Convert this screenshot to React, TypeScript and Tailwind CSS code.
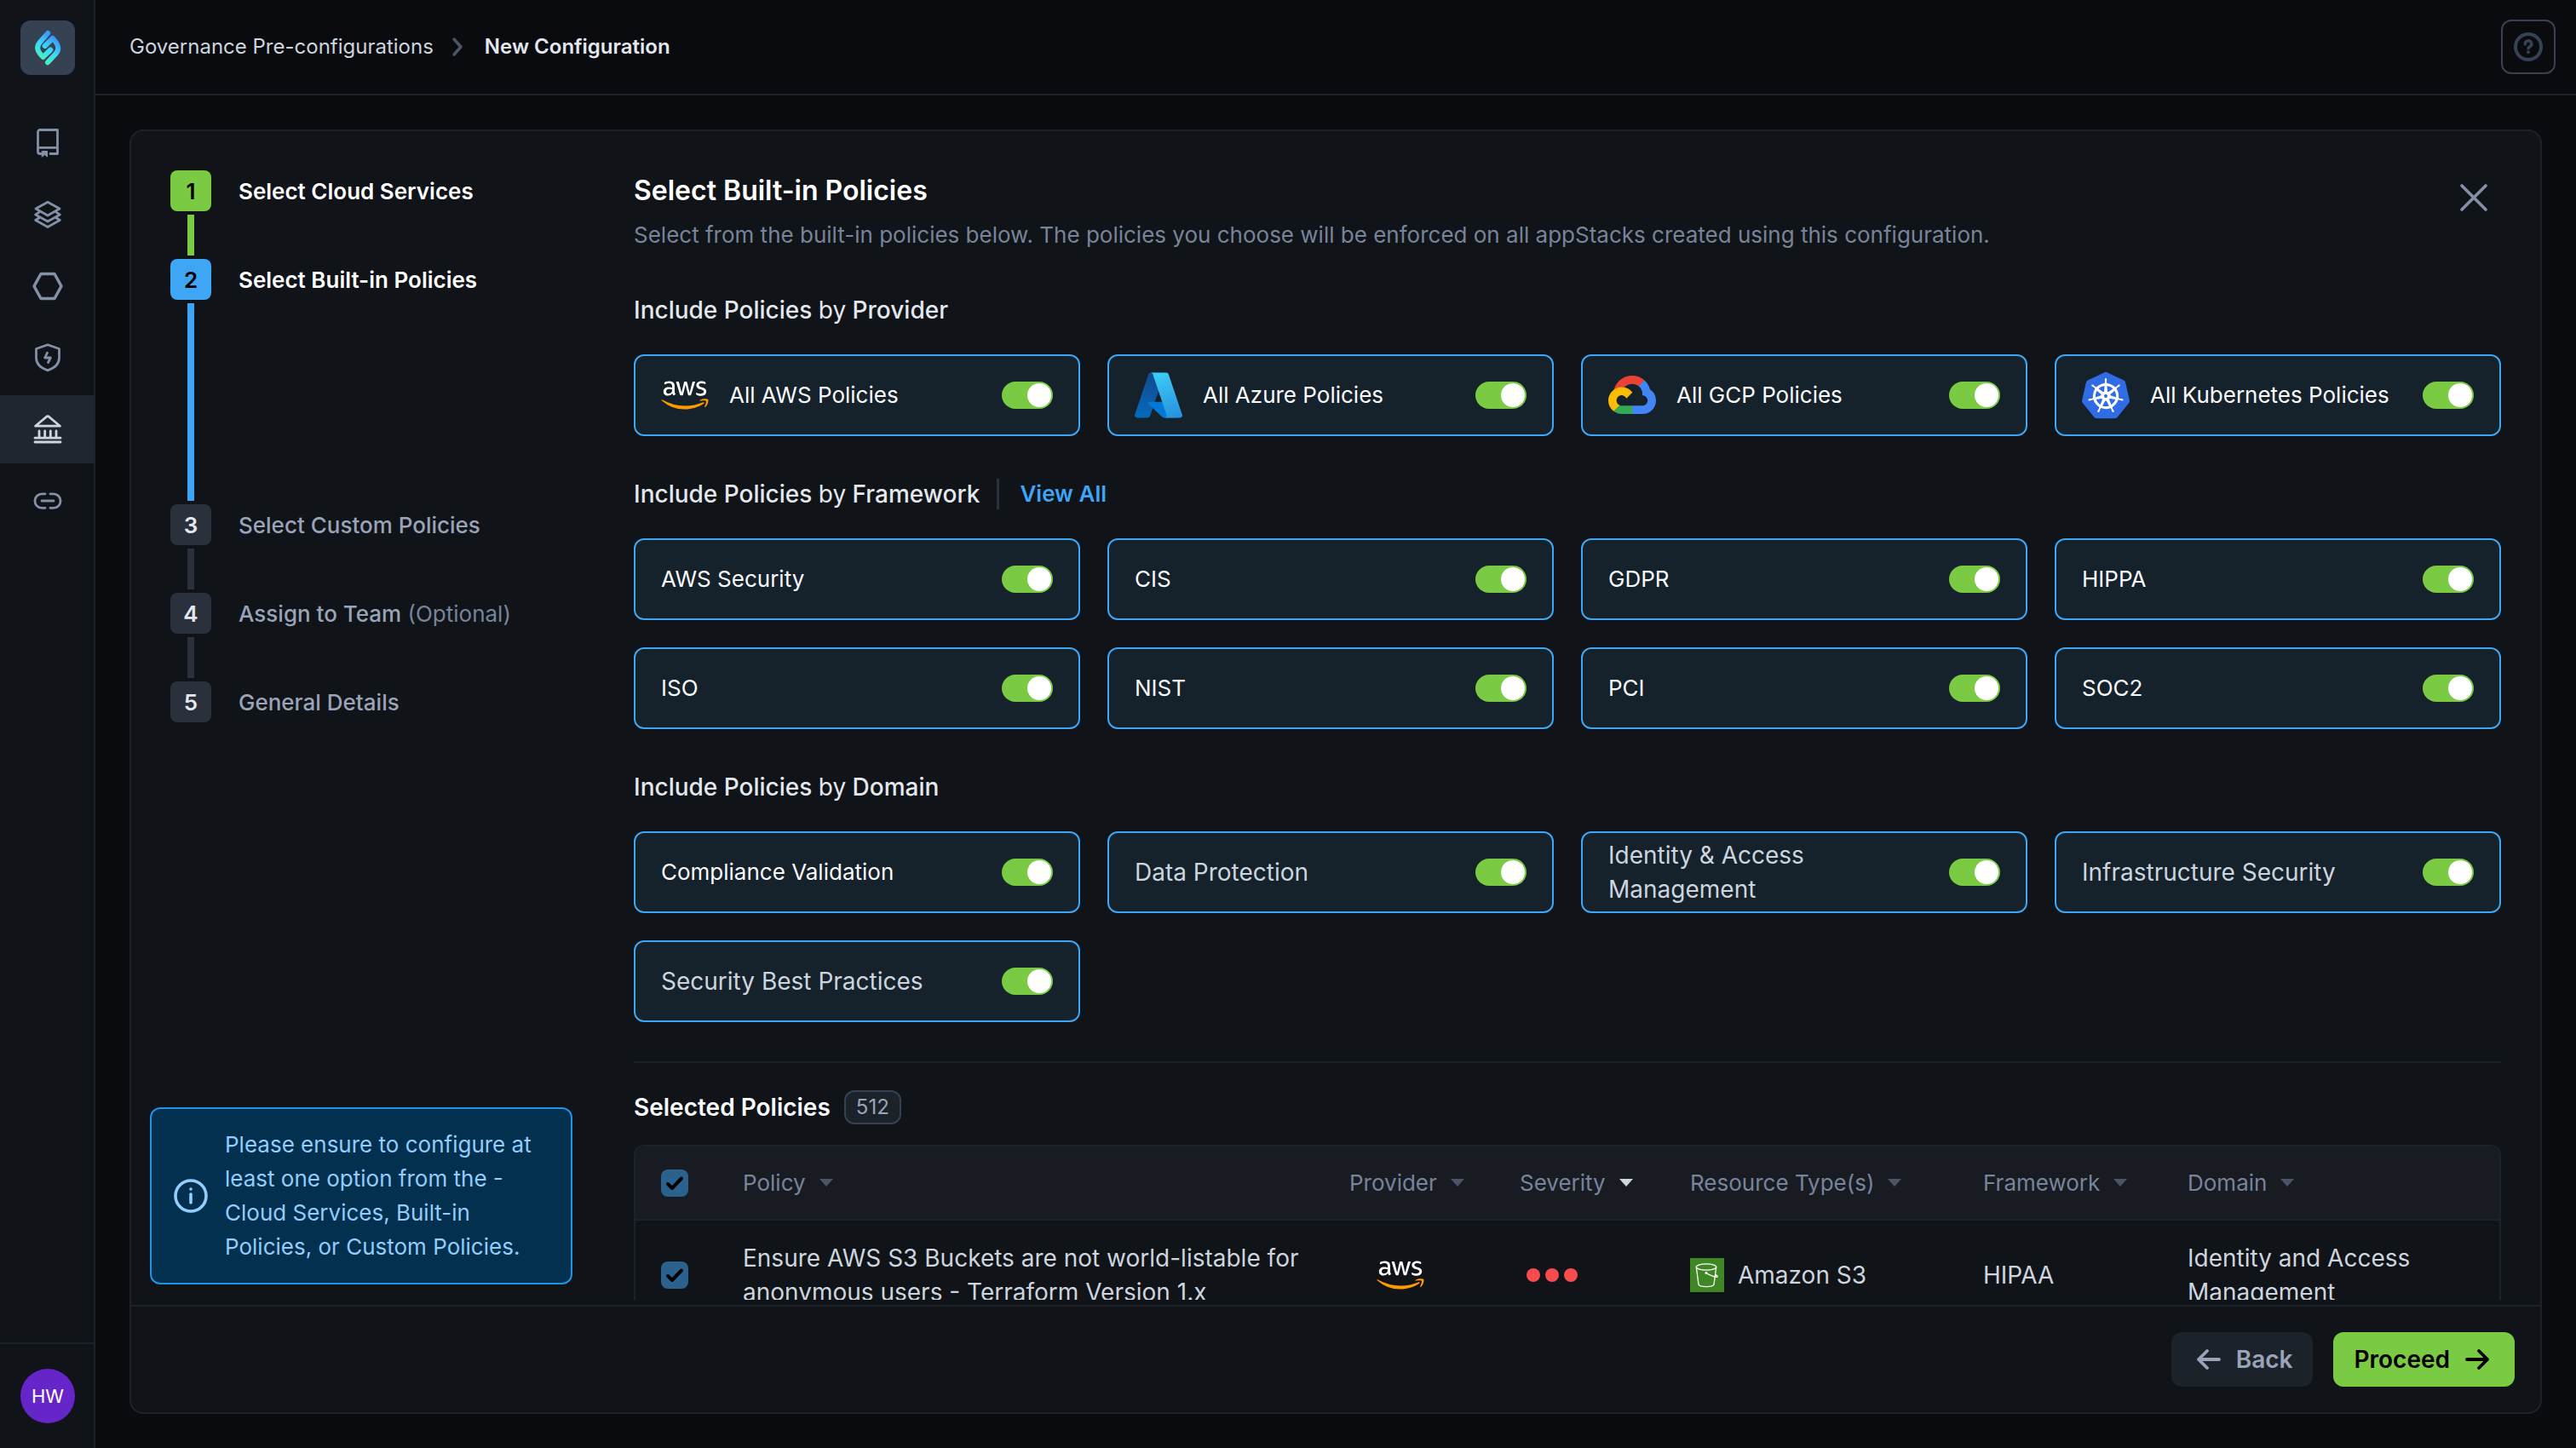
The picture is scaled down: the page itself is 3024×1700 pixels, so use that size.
import { useState } from "react";
import type { ReactNode } from "react";
import clsx from "clsx";
import { FaAws } from "react-icons/fa";
import { SiKubernetes } from "react-icons/si";

type Step = {
  label: string;
  hint?: string;
  state: "done" | "current" | "todo";
};

type PolicyOption = {
  label: string;
  icon?: ReactNode;
  large?: boolean;
};

const LogoMark = () => (
  <svg viewBox="0 0 64 64" className="size-16" fill="none" aria-hidden="true">
    <defs>
      <linearGradient id="logo-mark" x1="0.7" y1="0" x2="0.3" y2="1">
        <stop offset="0" stopColor="#3b9bfa" />
        <stop offset="0.55" stopColor="#3cd8fb" />
        <stop offset="1" stopColor="#48ecc4" />
      </linearGradient>
    </defs>
    <g
      stroke="url(#logo-mark)"
      strokeWidth="6"
      strokeLinecap="round"
      strokeLinejoin="round"
    >
      <path d="M32.2 15 22.5 26C18.6 31 19.2 35.5 26.5 43L35.3 34.5" />
      <path d="M32 49.2 42 38.5C45.8 33.5 45.2 28.5 37.8 21L28.7 30" />
    </g>
  </svg>
);

const AwsLogo = () => (
  <>
    <svg width="0" height="0" className="absolute" aria-hidden="true">
      <linearGradient id="aws-fill" x1="0" y1="0" x2="0" y2="1">
        <stop offset="0.6" stopColor="#ffffff" />
        <stop offset="0.6" stopColor="#ff9900" />
      </linearGradient>
    </svg>
    <FaAws className="h-11 w-14 fill-[url(#aws-fill)]" aria-label="AWS" />
  </>
);

const AzureLogo = () => (
  <svg viewBox="4 4 88 88" className="size-14" aria-hidden="true">
    <defs>
      <linearGradient
        id="azure-left"
        x1="58.9"
        y1="12.7"
        x2="31.9"
        y2="92.6"
        gradientUnits="userSpaceOnUse"
      >
        <stop offset="0" stopColor="#114a8b" />
        <stop offset="1" stopColor="#0669bc" />
      </linearGradient>
      <linearGradient
        id="azure-right"
        x1="45.8"
        y1="10.3"
        x2="75.5"
        y2="89.4"
        gradientUnits="userSpaceOnUse"
      >
        <stop offset="0" stopColor="#3ccbf4" />
        <stop offset="1" stopColor="#2892df" />
      </linearGradient>
    </defs>
    <path
      fill="url(#azure-left)"
      d="M33.338 6.544h26.038l-27.03 80.087a4.152 4.152 0 0 1-3.933 2.824H8.149a4.145 4.145 0 0 1-3.928-5.47L29.404 9.368a4.152 4.152 0 0 1 3.934-2.825z"
    />
    <path
      fill="#0078d4"
      d="M71.175 60.261h-41.29a1.911 1.911 0 0 0-1.305 3.309l26.532 24.764a4.171 4.171 0 0 0 2.846 1.121h23.38z"
    />
    <path
      fill="url(#azure-right)"
      d="M66.595 9.364a4.145 4.145 0 0 0-3.928-2.82H33.648a4.146 4.146 0 0 1 3.928 2.82l25.184 74.62a4.146 4.146 0 0 1-3.928 5.472h29.02a4.146 4.146 0 0 0 3.927-5.472z"
    />
  </svg>
);

const GcpLogo = () => (
  <svg viewBox="0 0 256 206" className="w-14" aria-hidden="true">
    <path
      fill="#ea4335"
      d="M170.252 56.819l22.253-22.253 1.483-9.37C153.437-11.677 88.976-7.496 52.42 33.92 42.267 45.423 34.734 59.764 30.717 74.573l7.97-1.123 44.505-7.34 3.436-3.513c19.797-21.742 53.27-24.667 76.128-6.168l7.496.39z"
    />
    <path
      fill="#4285f4"
      d="M224.205 73.918a100.249 100.249 0 0 0-30.217-48.722l-31.232 31.232a55.515 55.515 0 0 1 20.379 44.037v5.544c15.35 0 27.797 12.445 27.797 27.796 0 15.352-12.446 27.485-27.797 27.485h-55.671l-5.466 5.934v33.34l5.466 5.231h55.67c39.93.311 72.553-31.494 72.864-71.424a72.303 72.303 0 0 0-31.793-60.453"
    />
    <path
      fill="#34a853"
      d="M71.87 205.796h55.593V161.29H71.87a27.275 27.275 0 0 1-11.4-2.498l-7.887 2.42-22.409 22.253-1.952 7.574c12.567 9.489 27.9 14.825 43.647 14.757"
    />
    <path
      fill="#fbbc05"
      d="M71.87 61.425C31.94 61.664-.237 94.228.001 134.158a72.301 72.301 0 0 0 28.222 56.88l32.248-32.246c-13.99-6.322-20.208-22.786-13.887-36.776 6.32-13.99 22.786-20.208 36.775-13.888a27.796 27.796 0 0 1 13.887 13.888l32.248-32.248A72.224 72.224 0 0 0 71.87 61.425"
    />
  </svg>
);

// white disc shows through the wheel cut out of the glyph
const KubernetesLogo = () => (
  <SiKubernetes
    className="size-14 bg-[radial-gradient(closest-side,#fff_84%,transparent_85%)] text-[#326ce5]"
    aria-hidden="true"
  />
);

const S3Icon = () => (
  <svg
    viewBox="0 0 40 40"
    className="size-10 bg-[#3f8624]"
    fill="none"
    stroke="#fff"
    strokeWidth="1.3"
    strokeLinecap="round"
    aria-hidden="true"
  >
    <ellipse cx="19" cy="10.5" rx="11.7" ry="3.7" />
    <path d="M7.3 10.5 10 31c.6 1.6 4 2.6 9 2.6s8.4-1 9-2.6l2.7-20.5" />
    <path d="M19 17.6c4 2.2 8 4 11 4.6 2 .4 2.8-.4 1.5-1.6l-1.6-1" />
    <circle cx="19" cy="17.6" r="0.9" fill="#fff" />
  </svg>
);

const navItems = [
  {
    label: "Catalog",
    icon: (
      <>
        <path d="M11 30.5H9A2.5 2.5 0 0 1 6.5 28V5A2.5 2.5 0 0 1 9 2.5h20.5v28H21" />
        <path d="M7 23.3h22" />
        <path
          d="M11.5 27.5h6v6.5l-3-2.5-3 2.5z"
          fill="currentColor"
          strokeWidth="1"
        />
      </>
    ),
  },
  {
    label: "Stacks",
    icon: (
      <>
        <path d="M18 3.2 32 11 18 19 4 11z" />
        <path d="M8 15.2 3.7 18 18 26 32.3 18 28 15.2" />
        <path d="M8 21.8 3.7 24.5 18 32.5l14.3-8L28 21.8" />
      </>
    ),
  },
  {
    label: "Resources",
    icon: <path strokeWidth="3.5" d="M2 18 10 3.5h16L34 18l-8 14.5H10z" />,
  },
  {
    label: "Security",
    icon: (
      <>
        <path d="M18 2.8 31.5 7.5V18c0 7-5 12-13.5 14.8C9.5 30 4.5 25 4.5 18V7.5z" />
        <path d="M17.5 12.2 14.7 18h6.6l-2.8 5.6" />
      </>
    ),
  },
  {
    label: "Governance",
    active: true,
    icon: (
      <>
        <path d="M16.6 3.2q1.4-1 2.8 0L32.5 14.2h-29z" />
        <path d="M8 20v7M14.7 20v7M21.3 20v7M28 20v7M3 28.2h30M3 33h30" />
      </>
    ),
  },
  {
    label: "Integrations",
    icon: (
      <path d="M15 9.8h-3.8a8.3 8.3 0 0 0 0 16.6H15M21 9.8h3.8a8.3 8.3 0 0 1 0 16.6H21M11 18h14" />
    ),
  },
];

const steps: Step[] = [
  { label: "Select Cloud Services", state: "done" },
  { label: "Select Built-in Policies", state: "current" },
  { label: "Select Custom Policies", state: "todo" },
  { label: "Assign to Team", hint: "(Optional)", state: "todo" },
  { label: "General Details", state: "todo" },
];

const providers: PolicyOption[] = [
  { label: "All AWS Policies", icon: <AwsLogo /> },
  { label: "All Azure Policies", icon: <AzureLogo /> },
  { label: "All GCP Policies", icon: <GcpLogo /> },
  { label: "All Kubernetes Policies", icon: <KubernetesLogo /> },
];

const frameworks: PolicyOption[] = [
  { label: "AWS Security" },
  { label: "CIS" },
  { label: "GDPR" },
  { label: "HIPPA" },
  { label: "ISO" },
  { label: "NIST" },
  { label: "PCI" },
  { label: "SOC2" },
];

const domains: PolicyOption[] = [
  { label: "Compliance Validation" },
  { label: "Data Protection", large: true },
  { label: "Identity & Access Management", large: true },
  { label: "Infrastructure Security", large: true },
  { label: "Security Best Practices", large: true },
];

const columns = [
  { label: "Policy" },
  { label: "Provider" },
  { label: "Severity", sorted: true },
  { label: "Resource Type(s)" },
  { label: "Framework" },
  { label: "Domain" },
];

const Sidebar = () => (
  <aside className="flex w-28 shrink-0 flex-col border-r-2 border-[#1c2229] bg-[#101317]">
    <div className="flex h-28 items-center justify-center pl-0.5">
      <a href="#" aria-label="Home" className="rounded-xl bg-[#364152]">
        <LogoMark />
      </a>
    </div>
    <nav className="mt-4 flex flex-1 flex-col gap-1">
      {navItems.map((item) => (
        <a
          key={item.label}
          href="#"
          aria-label={item.label}
          className={clsx(
            "flex h-20 items-center justify-center pl-0.5",
            item.active ? "bg-[#20262d] text-[#cdd5df]" : "text-[#8490a5]"
          )}
        >
          <svg
            viewBox="0 0 36 36"
            className="size-9"
            fill="none"
            stroke="currentColor"
            strokeWidth="2.8"
            strokeLinecap="round"
            strokeLinejoin="round"
          >
            {item.icon}
          </svg>
        </a>
      ))}
    </nav>
    <div className="flex h-[124px] items-center justify-center border-t-2 border-[#1c2229] pl-0.5">
      <button
        type="button"
        className="size-16 rounded-full bg-[#6525c8] text-[22px] text-white"
      >
        HW
      </button>
    </div>
  </aside>
);

const Header = () => (
  <header className="flex h-28 shrink-0 items-center justify-between border-b-2 border-[#1c2229] pr-6 pl-10">
    <nav aria-label="Breadcrumb" className="flex items-center text-2xl">
      <a href="#" className="text-[#cdd5df]">
        Governance Pre-configurations
      </a>
      <svg
        viewBox="0 0 16 24"
        className="mr-6 ml-5 h-6 w-4"
        fill="none"
        stroke="#4b5565"
        strokeWidth="3.5"
        strokeLinecap="round"
        strokeLinejoin="round"
        aria-hidden="true"
      >
        <path d="M4 3l8 9-8 9" />
      </svg>
      <span className="font-semibold text-[#e3e8ef]">New Configuration</span>
    </nav>
    <button
      type="button"
      aria-label="Help"
      className="flex size-16 items-center justify-center rounded-xl border-2 border-[#364152] text-[#364152]"
    >
      <svg
        viewBox="0 0 34 34"
        className="size-[34px]"
        fill="none"
        stroke="currentColor"
      >
        <circle cx="17" cy="17" r="15" strokeWidth="4" />
        <path
          d="M13.3 13.8a3.7 3.7 0 1 1 5.5 3c-1.4.8-1.8 1.3-1.8 2.2"
          strokeWidth="3.5"
          strokeLinecap="round"
        />
        <circle cx="17" cy="23.3" r="2" fill="currentColor" stroke="none" />
      </svg>
    </button>
  </header>
);

const Stepper = () => (
  <ol className="pl-6">
    {steps.map((step, index) => (
      <li key={step.label} className="flex gap-8">
        <div className="flex flex-col items-center gap-1 pb-1">
          <span
            className={clsx(
              "flex size-12 items-center justify-center rounded-lg text-[26px] font-semibold",
              step.state === "done" && "bg-[#7aca43] text-black",
              step.state === "current" && "bg-[#3fa5f5] text-black",
              step.state === "todo" && "bg-[#2a303c] text-[#e3e8ef]"
            )}
          >
            {index + 1}
          </span>
          {index < steps.length - 1 && (
            <span
              className={clsx(
                "w-2",
                step.state === "done" && "h-12 bg-[#7aca43]",
                step.state === "current" && "h-[232px] bg-[#3fa5f5]",
                step.state === "todo" && "h-12 bg-[#2a303c]"
              )}
            />
          )}
        </div>
        <a
          href="#"
          className={clsx(
            "h-12 text-[26px] leading-[50px]",
            step.state === "todo"
              ? "font-medium text-[#9aa4b8]"
              : "font-semibold text-white"
          )}
        >
          {step.label}
          {step.hint && (
            <span className="font-normal text-[#78849a]"> {step.hint}</span>
          )}
        </a>
      </li>
    ))}
  </ol>
);

const PolicyCard = ({ label, icon, large }: PolicyOption) => {
  const [enabled, setEnabled] = useState(true);

  return (
    <label
      className={clsx(
        "flex h-24 items-center gap-6 rounded-xl border-2 px-[30px] leading-10",
        enabled ? "border-[#3fa5f5] bg-[#15212b]" : "border-[#364152]",
        large ? "text-[28px] text-[#cdd5df]" : "text-[26px] text-[#f8fafc]"
      )}
    >
      {icon}
      <span className="flex-1">{label}</span>
      <input
        type="checkbox"
        role="switch"
        checked={enabled}
        onChange={(e) => setEnabled(e.target.checked)}
        className="flex h-8 w-[60px] shrink-0 appearance-none items-center rounded-full bg-[#364152] p-0.5 before:size-7 before:rounded-full before:bg-white before:content-[''] checked:justify-end checked:bg-[#7aca43]"
      />
    </label>
  );
};

const PolicyGroup = ({
  title,
  options,
  action,
}: {
  title: string;
  options: PolicyOption[];
  action?: ReactNode;
}) => (
  <section className="mt-12">
    <div className="flex items-center">
      <h3 className="text-[28px] leading-10 font-medium text-[#e3e8ef]">
        Include Policies <span className="font-normal">by</span> {title}
      </h3>
      {action}
    </div>
    <div className="mt-8 grid grid-cols-4 gap-8">
      {options.map((option) => (
        <PolicyCard key={option.label} {...option} />
      ))}
    </div>
  </section>
);

const RowCheckbox = ({ label }: { label: string }) => (
  <label className="grid size-8">
    <input
      type="checkbox"
      defaultChecked
      aria-label={label}
      className="col-start-1 row-start-1 size-8 appearance-none rounded-lg bg-[#2a628d]"
    />
    <svg
      viewBox="0 0 32 32"
      className="pointer-events-none col-start-1 row-start-1 size-8"
      fill="none"
      stroke="#000"
      strokeWidth="4"
      strokeLinecap="round"
      strokeLinejoin="round"
      aria-hidden="true"
    >
      <path d="M8 17l5 5L24 10.5" />
    </svg>
  </label>
);

const PolicyTable = () => (
  <div className="mt-6 rounded-t-xl border-2 border-[#1c2229]">
    <table className="w-full table-fixed text-left">
      <colgroup>
        <col className="w-[94px]" />
        <col />
        <col className="w-[200px]" />
        <col className="w-[200px]" />
        <col className="w-[344px]" />
        <col className="w-[240px]" />
        <col className="w-[398px]" />
      </colgroup>
      <thead className="text-[26px] text-[#78849a]">
        <tr className="h-[86px]">
          <th className="rounded-tl-xl border-b-2 border-[#1c2229] bg-[#191b23] pl-[30px]">
            <RowCheckbox label="Select all policies" />
          </th>
          {columns.map((column) => (
            <th
              key={column.label}
              className="border-b-2 border-[#1c2229] bg-[#191b23] pl-8 font-normal last:rounded-tr-xl"
            >
              <button type="button" className="flex items-center gap-4">
                {column.label}
                <svg
                  viewBox="0 0 16 9"
                  className={clsx(
                    "w-4",
                    column.sorted ? "fill-[#cdd5df]" : "fill-[#4b5565]"
                  )}
                  aria-hidden="true"
                >
                  <path d="M0 0h16L8 9z" />
                </svg>
              </button>
            </th>
          ))}
        </tr>
      </thead>
      <tbody className="text-[28px] leading-10 text-[#cdd5df]">
        <tr className="h-32">
          <td className="pl-[30px]">
            <RowCheckbox label="Select policy" />
          </td>
          <td className="pl-8">
            Ensure AWS S3 Buckets are not world-listable for anonymous users -
            Terraform Version 1.x
          </td>
          <td className="pl-16">
            <AwsLogo />
          </td>
          <td className="pl-10">
            <span className="flex gap-1.5" role="img" aria-label="High severity">
              <i className="size-4 rounded-full bg-[#f64c4c]" />
              <i className="size-4 rounded-full bg-[#f64c4c]" />
              <i className="size-4 rounded-full bg-[#f64c4c]" />
            </span>
          </td>
          <td className="pl-8">
            <span className="flex items-center gap-4">
              <S3Icon />
              Amazon S3
            </span>
          </td>
          <td className="pl-8">HIPAA</td>
          <td className="pr-24 pl-8">Identity and Access Management</td>
        </tr>
      </tbody>
    </table>
  </div>
);

const InfoNote = () => (
  <div className="flex w-[496px] items-center gap-5 rounded-xl border-2 border-[#1e92e4] bg-[#04304f] py-[22px] pr-8 pl-[26px] text-[26px] leading-10 text-[#93cdfb]">
    <svg
      viewBox="0 0 40 40"
      className="size-10 shrink-0"
      fill="none"
      stroke="currentColor"
      strokeWidth="3.6"
      strokeLinecap="round"
      aria-hidden="true"
    >
      <circle cx="20" cy="20" r="18" />
      <path d="M20 18v10M20 12v.1" />
    </svg>
    <p>
      Please ensure to configure at least one option from the - Cloud Services,
      Built-in Policies, or Custom Policies.
    </p>
  </div>
);

const ArrowIcon = ({ d }: { d: string }) => (
  <svg
    viewBox="0 0 40 40"
    className="size-10"
    fill="none"
    stroke="currentColor"
    strokeWidth="3.8"
    strokeLinecap="round"
    strokeLinejoin="round"
    aria-hidden="true"
  >
    <path d={d} />
  </svg>
);

const App = () => (
  <div className="flex h-screen bg-[#0a0b0f] font-['Inter',sans-serif]">
    <Sidebar />
    <div className="flex min-w-0 flex-1 flex-col">
      <Header />
      <main className="flex min-h-0 flex-1 flex-col p-10">
        <div className="flex min-h-0 flex-1 flex-col rounded-2xl border-2 border-[#1c2229] bg-[#101317]">
          <div className="flex min-h-0 flex-1">
            <div className="flex w-[590px] shrink-0 flex-col justify-between pt-[46px] pb-6 pl-[22px]">
              <Stepper />
              <InfoNote />
            </div>
            <div className="mb-1.5 min-w-0 flex-1 overflow-y-auto pt-[50px] pr-[46px] [scrollbar-width:none]">
              <div className="flex items-start justify-between">
                <div>
                  <h2 className="text-[32px] leading-10 font-semibold text-white">
                    Select Built-in Policies
                  </h2>
                  <p className="mt-3 text-[26px] leading-10 text-[#78849a]">
                    Select from the built-in policies below. The policies you
                    choose will be enforced on all appStacks created using this
                    configuration.
                  </p>
                </div>
                <button
                  type="button"
                  aria-label="Close"
                  className="-mt-1 flex size-16 items-center justify-center text-[#8490a5]"
                >
                  <svg
                    viewBox="0 0 32 32"
                    className="size-8"
                    fill="none"
                    stroke="currentColor"
                    strokeWidth="3.6"
                    strokeLinecap="round"
                  >
                    <path d="M2 2l28 28M30 2 2 30" />
                  </svg>
                </button>
              </div>

              <PolicyGroup title="Provider" options={providers} />
              <PolicyGroup
                title="Framework"
                options={frameworks}
                action={
                  <a
                    href="#"
                    className="ml-5 border-l-3 border-[#2a303c] pl-6 text-[26px] leading-9 font-semibold text-[#3fa5f5]"
                  >
                    View All
                  </a>
                }
              />
              <PolicyGroup title="Domain" options={domains} />

              <hr className="mt-[46px] border-t-2 border-[#1c2229]" />

              <div className="mt-8 flex items-center gap-4">
                <h3 className="text-[28px] leading-10 font-semibold text-[#f8fafc]">
                  Selected Policies
                </h3>
                <span className="flex h-10 items-center rounded-xl border-2 border-[#364152] bg-[#1c2229] px-3 text-2xl text-[#9aa4b8]">
                  512
                </span>
              </div>
              <PolicyTable />
            </div>
          </div>

          <footer className="flex shrink-0 justify-end gap-6 border-t-2 border-[#1c2229] px-[30px] py-[30px] text-[28px] font-semibold">
            <button
              type="button"
              className="flex h-16 items-center gap-3 rounded-xl bg-[#1c2229] px-6 text-[#9aa4b8]"
            >
              <ArrowIcon d="M32 20H8M18 10 8 20l10 10" />
              Back
            </button>
            <button
              type="button"
              className="flex h-16 items-center gap-3 rounded-xl bg-[#7aca43] px-6 text-black"
            >
              Proceed
              <ArrowIcon d="M8 20h24M22 10l10 10-10 10" />
            </button>
          </footer>
        </div>
      </main>
    </div>
  </div>
);

export default App;
